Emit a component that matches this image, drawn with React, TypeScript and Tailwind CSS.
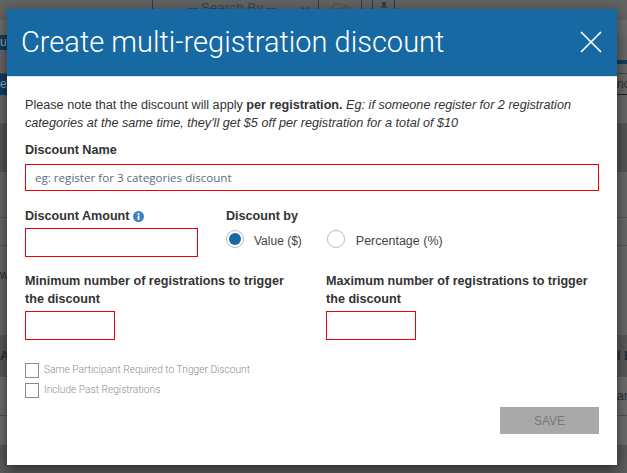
import React from 'react';
import { ChevronDown, X } from 'lucide-react';

const sans = "font-['Liberation_Sans',Arial,sans-serif]";
const labelCls = 'text-[12.6px] font-bold text-[#333]';
const inputCls = 'mt-[3px] h-[29px] border border-[#f00000]';

const Radio = ({ label, checked, textCls }: { label: string; checked?: boolean; textCls: string }) => (
  <div className="flex items-center">
    <span className="flex h-[18px] w-[18px] items-center justify-center rounded-full border border-[#bdbdbd] bg-white">
      {checked && <span className="h-[12px] w-[12px] rounded-full bg-[#1769a4]" />}
    </span>
    <span className={`translate-y-[2px] text-[#444] ${textCls}`}>{label}</span>
  </div>
);

const Check = ({ label }: { label: string }) => (
  <div className="flex h-[15px] items-center">
    <span className="h-[15px] w-[14px] border border-[#8a8a8a] bg-white" />
    <span className="ml-[5px] -translate-y-[1px] font-['Roboto',sans-serif] text-[10.2px] font-light text-[#8c8c8c]">{label}</span>
  </div>
);

const Backdrop = () => (
  <div className={`h-[473px] overflow-hidden bg-[#6b6b6b] text-[#2d2d2d] ${sans}`}>
    {/* search bar behind the dialog */}
    <div className="flex h-[20px] bg-[#646464] pl-[152px] text-[#2c4a66]">
      <div className="flex w-[167px] items-start border-x border-[#1f3f60] pl-[35px] text-[13.5px] leading-[16px]">
        -- Search By --
        <ChevronDown className="ml-auto mr-[7px] mt-[3px] h-[12px] w-[12px]" strokeWidth={3} />
      </div>
      <div className="ml-[-1px] w-[44px] border-r border-[#1f3f60] pl-[2px] text-center text-[14px] leading-[16px] text-[#555]">Go</div>
      <div className="ml-[10px] flex w-[23px] justify-center border-x border-[#1f3f60] pt-[2px]">
        <svg viewBox="0 0 10 10" className="h-[8px] w-[8px]">
          <path d="M2 0h6v1H7v4l2 1v1H1V6l2-1V1H2z" fill="#1f3f60" />
        </svg>
      </div>
    </div>
    <div className="h-[15px] bg-[#707070]" />
    <div className="h-[15px]">
      <span className="block h-full w-[8px] overflow-hidden whitespace-nowrap bg-[#123f60] text-[12px] leading-[15px] text-[#9fb4c4]">un</span>
    </div>
    <div className="h-[10px]" />
    <div className="flex h-[4px] justify-end">
      <span className="w-[12px] bg-[#123f60]" />
    </div>
    <div className="h-[9px]" />
    <div className="flex h-[22px] justify-between border-t border-[#4a4a4a]">
      <span className="w-[8px] overflow-hidden bg-[#123f60] text-[12px] leading-[20px] text-[#9fb4c4]">e</span>
      <span className="w-[10px] overflow-hidden whitespace-nowrap border-b border-[#222] text-[12px] leading-[20px]">nc</span>
    </div>
    <div className="h-[28px]" />
    <div className="h-[49px] bg-[#575757]" />
    <div className="h-[46px] border-b border-[#555]" />
    <div className="h-[28px] border-b border-[#555]" />
    <div className="h-[89px] pt-[22px] text-[12px] leading-[14px]">wi</div>
    <div className="flex h-[42px] items-center justify-between bg-[#5b5b5b] text-[12.6px] font-bold">
      <span>A</span>
      <span className="w-[10px] whitespace-nowrap">l E</span>
    </div>
    <div className="flex h-[39px] items-center justify-end border-b border-[#555] bg-[#707070] text-[12.6px]">
      <span className="w-[10px] whitespace-nowrap">ar</span>
    </div>
    <div className="h-[29px] bg-[#707070]" />
    <div className="h-[28px] bg-[#5c5c5c]" />
  </div>
);

export default function App() {
  return (
    <div className="relative h-[473px] w-[627px] overflow-hidden">
      <Backdrop />

      {/* Dialog */}
      <div className={`absolute left-[7px] top-[9px] h-[456px] w-[610px] bg-white shadow-[0_4px_14px_rgba(0,0,0,0.6)] ${sans}`}>
        <div className="flex h-[68px] items-center justify-between border-b border-[#d8e4ee] bg-[#1769a4] pb-[2px] pl-[14px] pr-[7px] text-white">
          <h1 className="translate-y-[1px] font-['Roboto',sans-serif] text-[29px] font-light">Create multi-registration discount</h1>
          <X className="h-[38px] w-[38px]" strokeWidth={1.1} />
        </div>

        <div className="px-[18px] pt-[19px]">
          <p className="text-[12.65px] leading-[18px] text-[#333]">
            Please note that the discount will apply <b>per registration.</b>{' '}
            <i>Eg: if someone register for 2 registration categories at the same time, they'll get $5 off per registration for a total of $10</i>
          </p>

          <label className={`mt-[9px] block leading-[18px] ${labelCls}`}>Discount Name</label>
          <div className="mt-[5px] flex h-[27px] items-center border border-[#f00000] pl-[9px] pt-[1px] font-['Open_Sans',sans-serif] text-[11.6px] text-[#5b6b80]">
            eg: register for 3 categories discount
          </div>

          <div className="mt-[16px] flex">
            <div className="w-[173px]">
              <label className={`flex h-[18px] items-center ${labelCls}`}>
                Discount Amount
                <svg viewBox="0 0 12 12" className="ml-[4px] h-[11px] w-[11px]">
                  <circle cx="6" cy="6" r="6" fill="#3f80c4" />
                  <rect x="5" y="5" width="2" height="4.6" fill="#fff" />
                  <rect x="5" y="2.4" width="2" height="1.8" fill="#fff" />
                </svg>
              </label>
              <div className={inputCls} />
            </div>
            <div className="ml-[28px]">
              <label className={`flex h-[18px] items-center ${labelCls}`}>Discount by</label>
              <div className="mt-[5px] flex gap-[25px]">
                <Radio label="Value ($)" checked textCls="ml-[10px] text-[12px]" />
                <Radio label="Percentage (%)" textCls="ml-[11px] text-[12.5px]" />
              </div>
            </div>
          </div>

          <div className="mt-[15px] flex">
            <div className="w-[301px]">
              <label className={`block w-[270px] leading-[18px] ${labelCls}`}>Minimum number of registrations to trigger the discount</label>
              <div className={`${inputCls} w-[90px]`} />
            </div>
            <div>
              <label className={`block w-[270px] leading-[18px] ${labelCls}`}>Maximum number of registrations to trigger the discount</label>
              <div className={`${inputCls} w-[90px]`} />
            </div>
          </div>

          <div className="mt-[23px] flex flex-col gap-[5px]">
            <Check label="Same Participant Required to Trigger Discount" />
            <Check label="Include Past Registrations" />
          </div>

          <div className="mt-[9px] flex justify-end">
            <button className="h-[27px] w-[99px] bg-[#a9a9a9] text-[12px] text-[#777]">SAVE</button>
          </div>
        </div>
      </div>
    </div>
  );
}
